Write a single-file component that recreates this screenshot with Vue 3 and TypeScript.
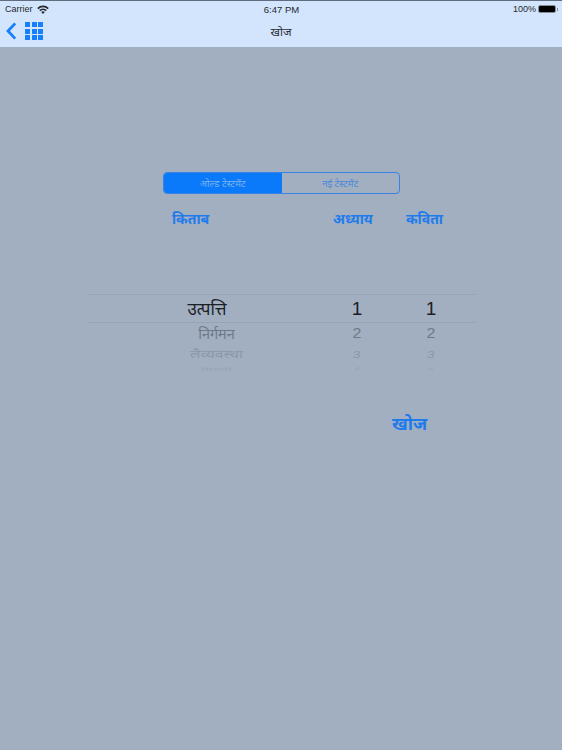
<script setup lang="ts">
const rows = [
  { book: 'निर्गमन', num: '2', cls: 'r2' },
  { book: 'लैव्यवस्था', num: '3', cls: 'r3' },
  { book: 'गिनती', num: '4', cls: 'r4' },
]
const cells = Array.from({ length: 9 }, (_, i) => i)
</script>

<template>
  <div class="page">
    <header class="top">
      <div class="status">
        <div class="status-left">
          <span>Carrier</span>
          <svg class="wifi" width="12" height="9" viewBox="0 0 12 9">
            <path d="M0.2 2.9A8.3 8.3 0 0 1 11.8 2.9L10.6 4.2A6.6 6.6 0 0 0 1.4 4.2Z" fill="#26282c" />
            <path d="M2.2 5A5.4 5.4 0 0 1 9.8 5L8.6 6.2A3.7 3.7 0 0 0 3.4 6.2Z" fill="#26282c" />
            <path d="M4.2 7A2.6 2.6 0 0 1 7.8 7L6 8.9Z" fill="#26282c" />
          </svg>
        </div>
        <span class="time">6:47 PM</span>
        <div class="status-right">
          <span>100%</span>
          <span class="battery"><span class="charge"></span></span>
          <span class="nub"></span>
        </div>
      </div>
      <nav class="nav">
        <div class="nav-icons">
          <svg width="11" height="18" viewBox="0 0 11 18">
            <path d="M9.2 1.4L2 9L9.2 16.6" fill="none" stroke="#167ffc" stroke-width="2.8" />
          </svg>
          <div class="grid-icon"><i v-for="c in cells" :key="c"></i></div>
        </div>
        <span class="title">खोज</span>
      </nav>
    </header>

    <main class="content">
      <div class="segment">
        <span class="seg active">ओल्ड टेस्टमेंट</span>
        <span class="seg">नई टेस्टमेंट</span>
      </div>

      <div class="labels">
        <span>किताब</span>
        <span>अध्याय</span>
        <span>कविता</span>
      </div>

      <div class="picker">
        <div class="row selected">
          <span>उत्पत्ति</span>
          <span class="num">1</span>
          <span class="num">1</span>
        </div>
        <div v-for="r in rows" :key="r.num" class="row" :class="r.cls">
          <span class="book"><span class="squash">{{ r.book }}</span></span>
          <span class="num"><span class="squash">{{ r.num }}</span></span>
          <span class="num"><span class="squash">{{ r.num }}</span></span>
        </div>
      </div>

      <div class="search-row">
        <button class="search">खोज</button>
      </div>
    </main>
  </div>
</template>

<style>
html, body { margin: 0; background: #a1afc0; }
</style>

<style scoped>
.page {
  width: 562px;
  height: 750px;
  overflow: hidden;
  background: #a1afc0;
  display: flex;
  flex-direction: column;
  font-family: "Noto Sans", "Liberation Sans", sans-serif;
}
.top {
  height: 47px;
  flex: none;
  background: #d2e5fd;
  box-sizing: border-box;
  border-top: 1px solid #5f6d7e;
  color: #26282c;
  font-family: "Liberation Sans", Arial, sans-serif;
}
.status {
  height: 16px;
  display: grid;
  grid-template-columns: 1fr auto 1fr;
  align-items: center;
  padding: 0 4px 0 5px;
  font-size: 9px;
}
.status-left { display: flex; align-items: center; gap: 4px; }
.time { font-size: 9.5px; }
.status-right { display: flex; align-items: center; justify-content: flex-end; }
.status-right > span:first-child { margin-right: 2px; }
.battery {
  width: 18px; height: 8px;
  border: 1px solid #848c96;
  border-radius: 2px;
  box-sizing: border-box;
  display: block;
}
.charge { display: block; height: 100%; background: #000; border-radius: 1px; }
.nub { width: 1px; height: 3px; background: #848c96; margin-left: 1px; }
.nav {
  height: 30px;
  position: relative;
  display: flex;
  align-items: center;
  justify-content: center;
}
.nav-icons {
  position: absolute;
  left: 6px;
  top: 5px;
  display: flex;
  align-items: center;
  gap: 8px;
}
.grid-icon {
  display: grid;
  grid-template-columns: repeat(3, 5px);
  grid-auto-rows: 5px;
  gap: 1.5px;
}
.grid-icon i { background: #167ffc; display: block; }
.title { font-size: 11.5px; color: #2a2d33; font-family: "Noto Sans", sans-serif; margin-top: -2px; }
.content { flex: 1; display: flex; flex-direction: column; padding-top: 125px; }
.segment {
  width: 237px;
  height: 22px;
  margin-left: 163px;
  display: flex;
  box-sizing: border-box;
  border: 1px solid #3a82e4;
  border-radius: 4px;
  overflow: hidden;
  flex: none;
}
.seg {
  flex: 1;
  display: flex;
  align-items: center;
  justify-content: center;
  font-size: 9.5px;
  color: #4e88d9;
}
.seg.active { background: #0a7afa; color: #7db2f0; }
.labels {
  display: grid;
  grid-template-columns: 161px 73px auto;
  margin: 13px 0 0 172px;
  height: 22px;
  align-items: center;
  font-size: 14px;
  font-weight: 700;
  color: #1f7bec;
}
.picker {
  margin: 65px 0 0 87px;
  width: 389px;
  display: flex;
  flex-direction: column;
  flex: none;
}
.row {
  display: grid;
  grid-template-columns: 240px 60px 88px;
  text-align: center;
}
.num { font-family: "Liberation Sans", Arial, sans-serif; }
.book { padding-left: 19px; }
.selected {
  height: 27px;
  align-items: center;
  border-top: 1px solid #96a4b5;
  border-bottom: 1px solid #96a4b5;
  font-size: 17px;
  line-height: 25px;
  color: #1c2026;
}
.selected .num { font-size: 19px; }
.squash { display: inline-block; }
.r2 { height: 20px; align-items: center; font-size: 14.5px; color: #6e7a89; }
.r2 .num { font-size: 16px; }
.r2 .squash { transform: scaleY(0.95); }
.r3 { height: 21px; align-items: center; font-size: 15.5px; color: #8b98a8; }
.r3 .num { font-size: 14px; }
.r3 .squash { transform: scaleY(0.7); }
.r3 .num .squash { transform: scaleY(0.72) skewX(-8deg); }
.r4 { height: 10px; align-items: center; font-size: 14px; color: #97a4b5; line-height: 10px; }
.r4 .num { font-size: 10px; }
.r4 .squash { transform: scaleY(0.32); }
.search-row {
  margin-top: 37px;
  display: flex;
  padding-left: 392px;
}
.search {
  appearance: none;
  background: none;
  border: 0;
  padding: 0;
  font: 700 18px "Noto Sans", sans-serif;
  color: #1f7bec;
}
</style>
